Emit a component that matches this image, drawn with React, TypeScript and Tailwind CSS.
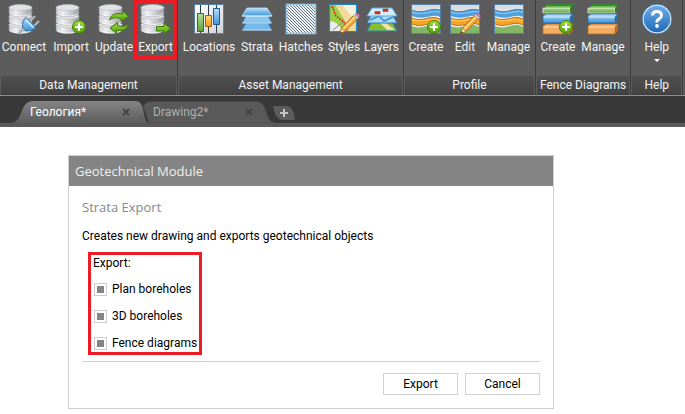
import React, { ReactNode } from "react";

interface ToolProps {
    label: string;
    width: string;
    children: ReactNode;
    highlighted?: boolean;
    dropdown?: boolean;
}

function Icon({ children }: { children: ReactNode }) {
    return (
        <svg viewBox="0 0 32 32" className="size-8 shrink-0" aria-hidden="true">
            {children}
        </svg>
    );
}

// Shared gradients for all the ribbon icons
function Gradients() {
    return (
        <svg className="absolute size-0" aria-hidden="true">
            <defs>
                <linearGradient id="metal" x1="0" x2="1" y1="0" y2="0">
                    <stop offset="0" stopColor="#c9cbd0" />
                    <stop offset="0.3" stopColor="#f0f0f2" />
                    <stop offset="1" stopColor="#9c9fa7" />
                </linearGradient>
                <linearGradient id="green" x1="0" x2="0" y1="0" y2="1">
                    <stop offset="0" stopColor="#a4dc3c" />
                    <stop offset="1" stopColor="#4f9c0c" />
                </linearGradient>
                <linearGradient id="blue" x1="0" x2="0" y1="0" y2="1">
                    <stop offset="0" stopColor="#b5e0fa" />
                    <stop offset="1" stopColor="#3f93d8" />
                </linearGradient>
                <linearGradient id="orange" x1="0" x2="0" y1="0" y2="1">
                    <stop offset="0" stopColor="#ffd873" />
                    <stop offset="1" stopColor="#f49a1c" />
                </linearGradient>
                <linearGradient id="paper" x1="0" x2="1" y1="0" y2="1">
                    <stop offset="0" stopColor="#ffffff" />
                    <stop offset="1" stopColor="#cfd3d8" />
                </linearGradient>
                <linearGradient id="leaf" x1="0" x2="0" y1="0" y2="1">
                    <stop offset="0" stopColor="#b4dd94" />
                    <stop offset="1" stopColor="#5f9f3e" />
                </linearGradient>
                <linearGradient id="help" x1="0" x2="0" y1="0" y2="1">
                    <stop offset="0" stopColor="#6fb0ec" />
                    <stop offset="1" stopColor="#1e68b8" />
                </linearGradient>
                <pattern id="hatch" width="3" height="3" patternUnits="userSpaceOnUse">
                    <path d="M-1 -1L4 4M-1 2L1 4M2 -1L4 1" stroke="#41505a" strokeWidth="0.8" />
                </pattern>
            </defs>
        </svg>
    );
}

function Database() {
    return (
        <g>
            {[20, 11.5, 3].map((y) => (
                <g key={y} transform={`translate(0 ${y})`}>
                    <path d="M1 1.5V7C1 9 6 10.5 12.5 10.5S24 9 24 7V1.5Z" fill="url(#metal)" stroke="#85888f" strokeWidth="0.6" />
                    <ellipse cx="12.5" cy="1.5" rx="11.5" ry="3" fill="#e2e3e6" stroke="#b9bbc1" strokeWidth="0.6" />
                    <path d="M1.5 7C3 9 7 10 12.5 10S22 9 23.5 7" fill="none" stroke="#fff" strokeWidth="0.8" />
                </g>
            ))}
        </g>
    );
}

function PlusBadge() {
    return (
        <g>
            <circle cx="24" cy="24" r="6.5" fill="url(#green)" stroke="#3d7d0a" />
            <path d="M24 20.2V27.8M20.2 24H27.8" stroke="#fff" strokeWidth="2.2" />
        </g>
    );
}

function Pencil() {
    return (
        <g>
            <path d="M11.5 30.5L13.5 25L25.5 12.5L29.5 16L17 28.5Z" fill="#f7a833" stroke="#8f5310" strokeWidth="0.7" />
            <path d="M15 26L27 14" stroke="#ffe09a" strokeWidth="1.4" />
            <path d="M11.5 30.5L13.5 25L17 28.5Z" fill="#f3d9ae" stroke="#8f5310" strokeWidth="0.5" />
            <path d="M11.5 30.5L12.3 28.3L13.7 29.7Z" fill="#333" />
            <path d="M25.5 12.5L27 11L31 14.5L29.5 16Z" fill="#c9ccd2" />
            <path d="M27 11Q28.5 9.5 30.5 11T31 14.5Z" fill="#d77bb0" stroke="#9d4f80" strokeWidth="0.5" />
        </g>
    );
}

function Profile() {
    return (
        <g>
            <path d="M1.5 1.5H30.5V30.5H1.5Z" fill="#f2efe6" />
            <path d="M2 2H30V6C22 3 17 11 2 6Z" fill="#dcdfe2" />
            <path d="M2 7C14 12 20 4 30 7V14C22 10 15 18 2 13Z" fill="#4f9fdf" />
            <path d="M2 9C14 14 20 6 30 9" fill="none" stroke="#7fc0f0" strokeWidth="1.5" />
            <path d="M2 15C13 20 20 11 30 16V22C20 17 13 26 2 21Z" fill="#f7a325" />
            <path d="M2 16.5C13 21 20 13 30 18" fill="none" stroke="#ffc04a" strokeWidth="1.5" />
            <path d="M2 23C13 28 20 18 30 24V30H2Z" fill="#83b765" />
            <path d="M2 7C14 12 20 4 30 7" fill="none" stroke="#28618f" strokeWidth="0.7" />
            <path d="M2 15C13 20 20 11 30 16M2 21C13 26 20 17 30 22" fill="none" stroke="#8a5c1c" strokeWidth="0.7" />
            <path d="M1.5 1.5H30.5V30.5H1.5Z" fill="none" stroke="#5682aa" />
        </g>
    );
}

function Fence() {
    return (
        <g>
            <path d="M1 10L5 1H31L28 10Z" fill="#69b552" />
            <path d="M5 1H31L30 3H4Z" fill="#398932" />
            <path d="M1 10V5H28V10Z" fill="url(#leaf)" stroke="#dff0d2" strokeWidth="0.8" />
            <path d="M28 10V5L31 1V7Z" fill="#367b2c" />
            <path d="M1 20V13L4 11H31L28 14V20Z" fill="url(#blue)" stroke="#2466a0" strokeWidth="0.7" />
            <path d="M28 20V14L31 11V17Z" fill="#2b6ca9" />
            <path d="M1.5 14H28" stroke="#d8effd" />
            <path d="M1 31V23L4 21H31L28 24V31Z" fill="#f4ac62" stroke="#b76618" strokeWidth="0.7" />
            <path d="M28 31V24L31 21V28Z" fill="#bd681e" />
            <path d="M1.5 24H28" stroke="#ffe1bd" />
        </g>
    );
}

function Tool({ label, width, children, highlighted, dropdown }: ToolProps) {
    return (
        <button type="button" className={`relative flex shrink-0 flex-col items-center gap-1 pt-[3px] ${width}`}>
            <Icon>{children}</Icon>
            <span className="text-[12px] leading-4 whitespace-nowrap">{label}</span>
            {dropdown && (
                <svg viewBox="0 0 6 3" className="h-[3px] w-[6px]" aria-hidden="true">
                    <path d="M0 0H6L3 3Z" fill="#fff" />
                </svg>
            )}
            {highlighted && <span className="absolute inset-x-0 top-0 h-[60px] border-4 border-[#ed1c24]" />}
        </button>
    );
}

function Panel({ title, children }: { title: string; children: ReactNode }) {
    return (
        <section className="flex shrink-0 flex-col border-r border-[#3c3c3c]">
            <div className="flex h-[76px] items-start">{children}</div>
            <h2 className="h-[19px] border-x border-b border-x-[#5c5c5c] border-b-[#3c3c3c] bg-linear-to-b from-[#505050] to-[#434343] px-[3px] text-center text-[12px] leading-[18px] whitespace-nowrap">
                {title}
            </h2>
        </section>
    );
}

function Ribbon() {
    return (
        <header className="flex overflow-hidden border-b border-[#909090] bg-[#5c5c5c] text-[#f4f4f4]">
            <Panel title="Data Management">
                <Tool label="Connect" width="w-[48px]">
                    <Database />
                    <path d="M11 31Q12 28 15 26" fill="none" stroke="#a9b2bc" strokeWidth="2.5" />
                    <path d="M22 18L27 13M26 23L31 18" stroke="#b3b8bf" strokeWidth="2.2" />
                    <path d="M18 14.5L28 24.5Q25 28.5 17.5 27.5L14.5 24.5Q14 18 18 14.5Z" fill="url(#blue)" stroke="#2671ae" />
                    <path d="M18 17L25.5 24.5" stroke="#d3edff" strokeWidth="1.5" />
                </Tool>
                <Tool label="Import" width="w-[46px]">
                    <Database />
                    <PlusBadge />
                </Tool>
                <Tool label="Update" width="w-[40px]">
                    <Database />
                    <path d="M11.5 17Q13 10 21 10.5L25 11V8L30.5 13.5L23 18.5V15.5Q15 13.5 11.5 17Z" fill="url(#green)" stroke="#3d7d0a" />
                    <path d="M30.5 21Q29 28 21 27.5L18.5 27V30.5L12 25L19.5 19.5V22.5Q27 25 30.5 21Z" fill="url(#green)" stroke="#3d7d0a" />
                </Tool>
                <Tool label="Export" width="w-[43px]" highlighted>
                    <Database />
                    <path d="M16.5 23.5H24V20.5L30.5 25.5L24 31V28H16.5Z" fill="url(#green)" stroke="#3d7d0a" />
                </Tool>
            </Panel>
            <Panel title="Asset Management">
                <Tool label="Locations" width="w-[62px]">
                    <path d="M1.5 1.5H30.5V30.5H1.5Z" fill="url(#paper)" stroke="#5682aa" />
                    <path d="M7.5 2V30M15.5 2V30M23.5 2V30" stroke="#333b44" />
                    <path d="M4.5 10.5H10.5V28.5H4.5Z" fill="url(#leaf)" stroke="#326f20" />
                    <path d="M12.5 12.5H18.5V23.5H12.5Z" fill="url(#orange)" stroke="#a85f0b" />
                    <path d="M20.5 5.5H26.5V21.5H20.5Z" fill="url(#blue)" stroke="#1d5c96" />
                </Tool>
                <Tool label="Strata" width="w-[34px]">
                    <path d="M6 18H26L31 27H1Z" fill="#72b9eb" stroke="#2b73ae" strokeWidth="0.8" />
                    <path d="M6 11H26L31 20H1Z" fill="#8ac8f2" stroke="#2b73ae" strokeWidth="0.8" />
                    <path d="M6 5H26L31 13H1Z" fill="url(#blue)" stroke="#c5e6fb" strokeWidth="0.8" />
                    <path d="M1.5 13H30.5M1.5 20H30.5M1.5 27H30.5" stroke="#e1f3ff" />
                </Tool>
                <Tool label="Hatches" width="w-[54px]">
                    <path d="M1.5 1.5H30.5V30.5H1.5Z" fill="#eef4f8" />
                    <path d="M1.5 1.5H30.5V30.5H1.5Z" fill="url(#hatch)" stroke="#9bc8e2" strokeWidth="1.5" />
                </Tool>
                <Tool label="Styles" width="w-[32px]">
                    <path d="M1.5 1.5H28.5V28.5H1.5Z" fill="#f4f1df" />
                    <path d="M2 2H8C10 9 18 14 20 28H2Z" fill="#9dce43" />
                    <path d="M8 2H15C18 10 26 12 28 20V28H20C18 14 10 9 8 2Z" fill="#f4d99a" />
                    <path d="M2 18Q9 18 15 28H2Z" fill="#eee" />
                    <path d="M4 3L8 13L17 20" fill="none" stroke="#d9211c" strokeWidth="1.5" strokeDasharray="2 1" />
                    <path d="M5 27L15 19L20 27" fill="none" stroke="#888" />
                    <path d="M1.5 1.5H28.5V28.5H1.5Z" fill="none" stroke="#2187c8" strokeWidth="1.2" />
                    <Pencil />
                </Tool>
                <Tool label="Layers" width="w-[43px]">
                    <path d="M6 19H26L31 28H1Z" fill="#85bd31" stroke="#2783c4" />
                    <path d="M13 19H19L29 27H21Z" fill="#f5dfaa" />
                    <path d="M6 11H26L31 20H1Z" fill="#aed9f5" stroke="#2783c4" />
                    <path d="M4 17L13 13L18 18L27 14" fill="none" stroke="#3490d0" strokeWidth="1.5" />
                    <path d="M6 5H26L31 13H1Z" fill="#d5ecfb" stroke="#58a9df" />
                    <path d="M17 6H22V8.5H17ZM9 8.5H14V11H9Z" fill="#e3311f" stroke="#a51d12" strokeWidth="0.5" />
                </Tool>
            </Panel>
            <Panel title="Profile">
                <Tool label="Create" width="w-[44px]">
                    <Profile />
                    <PlusBadge />
                </Tool>
                <Tool label="Edit" width="w-[34px]">
                    <Profile />
                    <Pencil />
                </Tool>
                <Tool label="Manage" width="w-[53px]">
                    <Profile />
                </Tool>
            </Panel>
            <Panel title="Fence Diagrams">
                <Tool label="Create" width="w-[44px]">
                    <Fence />
                    <PlusBadge />
                </Tool>
                <Tool label="Manage" width="w-[46px]">
                    <Fence />
                </Tool>
            </Panel>
            <Panel title="Help">
                <Tool label="Help" width="w-[51px]" dropdown>
                    <circle cx="16" cy="16" r="14" fill="url(#help)" stroke="#d4e8fa" strokeWidth="1.5" />
                    <circle cx="16" cy="16" r="15" fill="none" stroke="#2a66a4" strokeWidth="0.7" />
                    <path d="M11.5 12.5Q11.5 8.5 16 8.5T20.5 12.5Q20.5 14.5 18 16T16 19.5" fill="none" stroke="#fff" strokeWidth="3" />
                    <circle cx="16" cy="23" r="1.9" fill="#fff" />
                </Tool>
            </Panel>
        </header>
    );
}

function CloseButton({ name }: { name: string }) {
    return (
        <button type="button" aria-label={`Close ${name}`} className="relative size-2">
            <svg viewBox="0 0 8 8" className="size-2">
                <path d="M1 1L7 7M7 1L1 7" stroke="#444" strokeWidth="1.8" />
            </svg>
        </button>
    );
}

function DrawingTabs() {
    return (
        <nav className="flex h-[31px] items-end overflow-hidden border-b-4 border-[#5a5a5a] bg-[#383838] pl-[11px] text-[12px]">
            <div className="relative z-10 flex h-[22px] w-[138px] items-center justify-between pr-[19px] pl-[19px]">
                <svg viewBox="0 0 138 22" preserveAspectRatio="none" className="absolute inset-0 size-full">
                    <defs>
                        <linearGradient id="tab" x1="0" x2="0" y1="0" y2="1">
                            <stop offset="0" stopColor="#858585" />
                            <stop offset="1" stopColor="#5c5c5c" />
                        </linearGradient>
                    </defs>
                    <path d="M0 22C13 21 8 0 22 0H124C136 0 130 20 138 22Z" fill="url(#tab)" />
                </svg>
                <a href="#geology" className="relative text-white">Геология*</a>
                <CloseButton name="Геология" />
            </div>
            <div className="relative -ml-2 flex h-[22px] w-[136px] items-center justify-between pr-6 pl-3">
                <svg viewBox="0 0 136 22" preserveAspectRatio="none" className="absolute inset-0 size-full">
                    <path d="M2 5Q5 0.5 11 0.5H115C129 0.5 121 20 135 22H8Z" fill="#5a5a5a" stroke="#484848" />
                </svg>
                <a href="#drawing2" className="relative text-[#b0b0b0]">Drawing2*</a>
                <CloseButton name="Drawing2" />
            </div>
            <button type="button" aria-label="New drawing" className="mb-[3px] -ml-1">
                <svg viewBox="0 0 22 14" className="h-[14px] w-[22px]">
                    <path d="M0 0H14Q21 1 22 14H9Q2 13 0 0Z" fill="#5c5c5c" />
                    <path d="M11 3V11M7 7H15" stroke="#c4c4c4" strokeWidth="2" />
                </svg>
            </button>
        </nav>
    );
}

const options = ["Plan boreholes", "3D boreholes", "Fence diagrams"];

function ExportDialog() {
    return (
        <form className="w-full max-w-[486px] border border-[#d0d0d0] bg-white text-[12px] leading-4 text-black">
            <h1 className="bg-[#848484] px-[6px] py-[5px] font-['Open_Sans',sans-serif] text-[13px] leading-5 text-[#f0f0f0]">
                Geotechnical Module
            </h1>
            <div className="px-[13px] pt-[11px] pb-[13px]">
                <h2 className="font-['Open_Sans',sans-serif] text-[13px] leading-5 text-[#888888]">Strata Export</h2>
                <p className="mt-[11px]">Creates new drawing and exports geotechnical objects</p>
                <fieldset className="mt-2 ml-[6px] w-fit border-[3px] border-[#ed1c24] px-[2px] pb-px">
                    <legend className="float-left leading-4">Export:</legend>
                    <div className="clear-both flex flex-col gap-[11px] pt-[10px]">
                        {options.map((option) => (
                            <label key={option} className="flex items-center gap-[5px] pl-px whitespace-nowrap">
                                <input
                                    type="checkbox"
                                    defaultChecked
                                    className="size-[13px] appearance-none border border-[#cccccc] bg-white bg-clip-content p-[2px] checked:bg-[#848484]"
                                />
                                {option}
                            </label>
                        ))}
                    </div>
                </fieldset>
                <div className="mt-[6px] flex justify-end gap-[7px] border-t border-[#d0d0d0] pt-[11px]">
                    <button type="button" className="h-[22px] w-[75px] border border-[#d0d0d0]">Export</button>
                    <button type="button" className="h-[22px] w-[75px] border border-[#d0d0d0]">Cancel</button>
                </div>
            </div>
        </form>
    );
}

export default function App() {
    return (
        <div className="min-h-screen bg-white font-[Roboto,'Open_Sans',sans-serif]">
            <Gradients />
            <Ribbon />
            <DrawingTabs />
            <main className="px-[68px] pt-7">
                <ExportDialog />
            </main>
        </div>
    );
}
